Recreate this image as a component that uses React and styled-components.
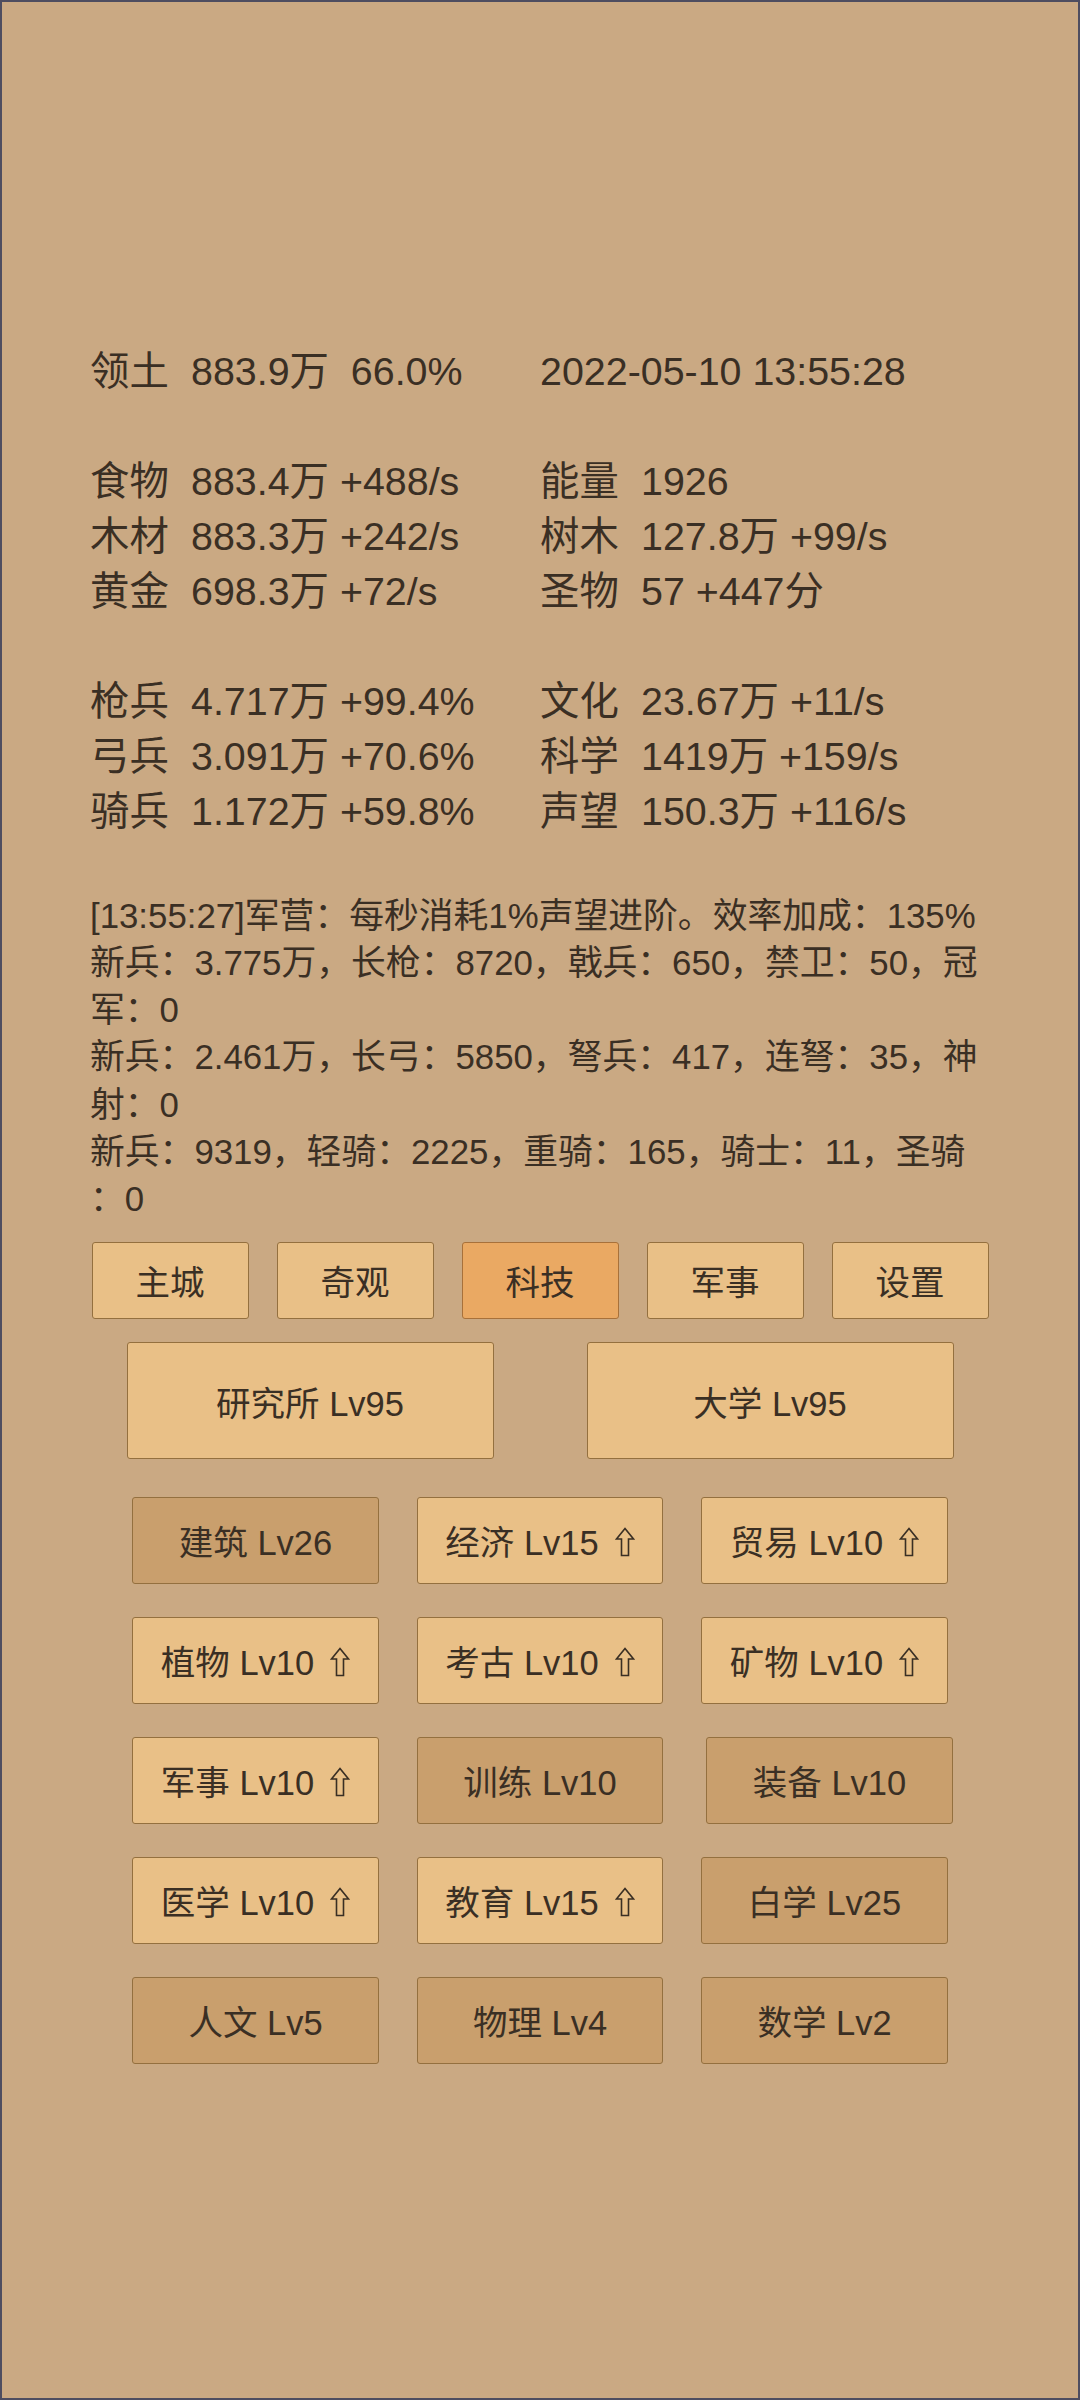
import React from 'react';
import styled, { createGlobalStyle } from 'styled-components';

const GlobalStyle = createGlobalStyle`
  html, body {
    margin: 0;
    padding: 0;
    background: #caa983;
  }
  * {
    box-sizing: border-box;
  }
`;

const stats = [
  [
    ['食物', '883.4万 +488/s', '能量', '1926'],
    ['木材', '883.3万 +242/s', '树木', '127.8万 +99/s'],
    ['黄金', '698.3万 +72/s', '圣物', '57 +447分'],
  ],
  [
    ['枪兵', '4.717万 +99.4%', '文化', '23.67万 +11/s'],
    ['弓兵', '3.091万 +70.6%', '科学', '1419万 +159/s'],
    ['骑兵', '1.172万 +59.8%', '声望', '150.3万 +116/s'],
  ],
];

const logLines = [
  '[13:55:27]军营：每秒消耗1%声望进阶。效率加成：135%',
  '新兵：3.775万，长枪：8720，戟兵：650，禁卫：50，冠军：0',
  '新兵：2.461万，长弓：5850，弩兵：417，连弩：35，神射：0',
  '新兵：9319，轻骑：2225，重骑：165，骑士：11，圣骑：0',
];

const tabs = ['主城', '奇观', '科技', '军事', '设置'];

const techRows = [
  [
    { name: '建筑 Lv26', done: true },
    { name: '经济 Lv15', up: true },
    { name: '贸易 Lv10', up: true },
  ],
  [
    { name: '植物 Lv10', up: true },
    { name: '考古 Lv10', up: true },
    { name: '矿物 Lv10', up: true },
  ],
  [
    { name: '军事 Lv10', up: true },
    { name: '训练 Lv10', done: true },
    { name: '装备 Lv10', done: true, nudge: true },
  ],
  [
    { name: '医学 Lv10', up: true },
    { name: '教育 Lv15', up: true },
    { name: '白学 Lv25', done: true },
  ],
  [
    { name: '人文 Lv5', done: true },
    { name: '物理 Lv4', done: true },
    { name: '数学 Lv2', done: true },
  ],
];

// hollow "upgrade available" arrow
const UpArrow = () => (
  <ArrowIcon width="20" height="30" viewBox="0 0 20 30">
    <path
      d="M10 1.5 L18.5 12 H13.5 V28.5 H6.5 V12 H1.5 Z"
      fill="none"
      stroke="#3a2f24"
      strokeWidth="1.6"
      strokeLinejoin="miter"
    />
  </ArrowIcon>
);

const App = () => {
  return (
    <Screen>
      <GlobalStyle />
      <Content>
        <StatsGrid>
          <Label>领土</Label>
          <Value>{'883.9万  66.0%'}</Value>
          <DateCell>2022-05-10 13:55:28</DateCell>
        </StatsGrid>

        {stats.map((block, i) => (
          <StatsGrid key={i} $spaced>
            {block.map((row) => (
              <React.Fragment key={row[0]}>
                <Label>{row[0]}</Label>
                <Value>{row[1]}</Value>
                <Label>{row[2]}</Label>
                <Value>{row[3]}</Value>
              </React.Fragment>
            ))}
          </StatsGrid>
        ))}

        <Log>
          {logLines.map((line) => (
            <div key={line}>{line}</div>
          ))}
        </Log>

        <TabBar>
          {tabs.map((t) => (
            <TabButton key={t} $active={t === '科技'}>
              {t}
            </TabButton>
          ))}
        </TabBar>
      </Content>

      <BuildingRow>
        <BuildingButton>研究所 Lv95</BuildingButton>
        <BuildingButton>大学 Lv95</BuildingButton>
      </BuildingRow>

      <TechGrid>
        {techRows.flat().map((tech) => (
          <TechButton key={tech.name} $done={tech.done} $nudge={tech.nudge}>
            {tech.name}
            {tech.up && <UpArrow />}
          </TechButton>
        ))}
      </TechGrid>
    </Screen>
  );
};

const Screen = styled.div`
  width: 1080px;
  height: 2400px;
  border: 2px solid #4e4d60;
  background: #caa983;
  color: #3a2f24;
  font-family: "Liberation Sans", "Noto Sans CJK SC", sans-serif;
  padding-top: 341.5px;
  overflow: hidden;
`;

const Content = styled.div`
  padding: 0 88px;
`;

const StatsGrid = styled.div`
  display: grid;
  grid-template-columns: 100px 350px 100px 1fr;
  font-size: 39.4px;
  line-height: 55px;
  margin-top: ${(p) => (p.$spaced ? '55px' : '0')};
`;

const Label = styled.div`
  white-space: nowrap;
`;

const Value = styled.div`
  white-space: pre;
  padding-left: 1px;
`;

const DateCell = styled.div`
  grid-column: 3 / 5;
  white-space: nowrap;
`;

const Log = styled.div`
  margin-top: 53px;
  font-size: 34.8px;
  line-height: 47.25px;
  line-break: anywhere;
  word-break: break-all;
`;

const TabBar = styled.div`
  display: flex;
  justify-content: center;
  gap: 28px;
  margin-top: 19.5px;
`;

const ButtonBase = styled.div`
  display: flex;
  align-items: center;
  justify-content: center;
  border: 1px solid #94703f;
  border-radius: 3px;
  font-size: 34.5px;
  white-space: nowrap;
`;

const TabButton = styled(ButtonBase)`
  width: 157px;
  height: 77px;
  background: ${(p) => (p.$active ? '#eaa963' : '#e9c087')};
  border-color: ${(p) => (p.$active ? '#a8713a' : '#94703f')};
`;

const BuildingRow = styled.div`
  display: flex;
  justify-content: center;
  gap: 93px;
  margin-top: 23.5px;
`;

const BuildingButton = styled(ButtonBase)`
  width: 367px;
  height: 117px;
  background: #e9c087;
`;

const TechGrid = styled.div`
  display: grid;
  grid-template-columns: repeat(3, 246.5px);
  grid-auto-rows: 87px;
  column-gap: 38px;
  row-gap: 33px;
  justify-content: center;
  margin-top: 37.5px;
`;

const TechButton = styled(ButtonBase)`
  width: 246.5px;
  background: ${(p) => (p.$done ? '#c99f6d' : '#e9c087')};
  margin-left: ${(p) => (p.$nudge ? '5px' : '0')};
`;

const ArrowIcon = styled.svg`
  margin-left: 16px;
  margin-top: 3px;
  flex-shrink: 0;
`;

export default App;
